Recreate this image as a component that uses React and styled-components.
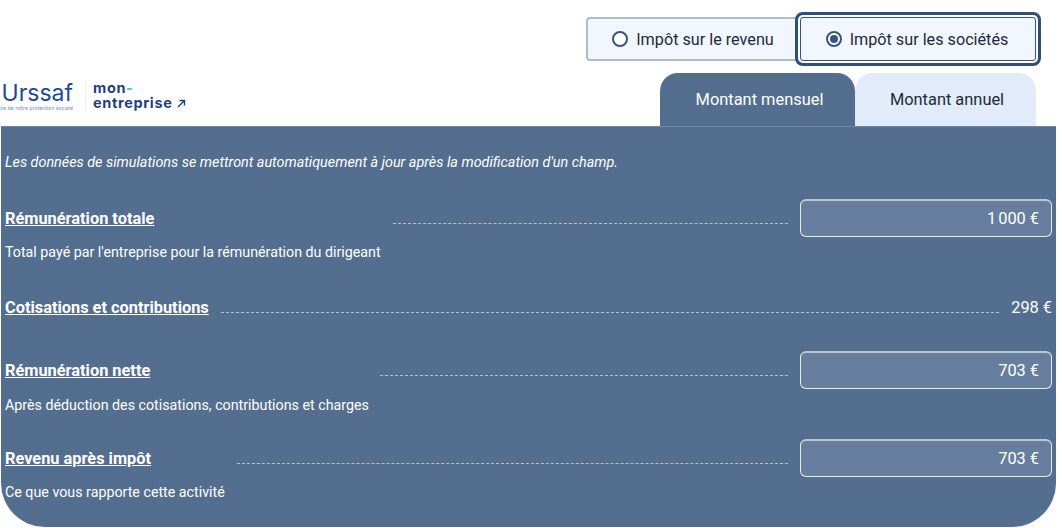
import React from "react";
import styled, { createGlobalStyle } from "styled-components";

const Global = createGlobalStyle`
  html, body { margin: 0; padding: 0; background: #fff; }
  body { font-family: Roboto, "Liberation Sans", sans-serif; overflow: hidden; }
`;
const Page = styled.div`
  width: 1056px;
  height: 528px;
  display: flex;
  flex-direction: column;
`;
const RadioBar = styled.div`
  display: flex;
  justify-content: flex-end;
  padding: 17px 20px 0 0;
  height: 44px;
`;
const RadioOption = styled.div`
  display: flex;
  align-items: center;
  justify-content: center;
  gap: 8px;
  height: 44px;
  box-sizing: border-box;
  width: ${(p) => p.$width}px;
  padding-right: ${(p) => (p.$active ? 2 : 0)}px;
  background: #f2f6fe;
  border-radius: 4px;
  font-size: 16.2px;
  color: #1e2a38;
  position: relative;
  border: 2px solid ${(p) => (p.$active ? "#34557d" : "#b0bbc7")};
  ${(p) => p.$active && "box-shadow: 0 0 0 2px #fff, 0 0 0 5px #2f4f78; border-radius: 3px; border-width:1px; z-index:1;"}
`;
const RadioCircle = styled.span`
  width: 16px;
  height: 16px;
  box-sizing: border-box;
  border: 2px solid #34557d;
  border-radius: 50%;
  background: #fff;
  display: flex;
  align-items: center;
  justify-content: center;
  &::after {
    content: "";
    display: ${(p) => (p.$checked ? "block" : "none")};
    width: 8px;
    height: 8px;
    border-radius: 50%;
    background: #34557d;
  }
`;
const HeaderRow = styled.div`
  display: flex;
  align-items: flex-end;
  justify-content: space-between;
  height: 65px;
  padding-right: 20px;
`;
const Logo = styled.div`
  display: flex;
  align-items: center;
  height: 32px;
  margin-bottom: 15px;
  width: 200px;
  overflow: hidden;
`;
const UrssafBlock = styled.div`
  width: 74px;
  padding: 1px 12px 0 0;
  box-sizing: content-box;
  border-right: 1px solid #eef1f5;
  height: 31px;
  display: flex;
  flex-direction: column;
  align-items: flex-end;
  justify-content: center;
  flex: none;
  overflow: hidden;
  margin-left: -1px;
`;
const UrssafName = styled.div`
  font-family: Inter, sans-serif;
  font-size: 23px;
  line-height: 24px;
  color: #1c4a92;
`;
const UrssafTag = styled.div`
  font-family: Inter, sans-serif;
  font-size: 5.2px;
  line-height: 6px;
  color: #6e8cc0;
  white-space: nowrap;
`;
const MonEntreprise = styled.div`
  margin-left: 7px;
  font-family: Inter, sans-serif;
  font-weight: 700;
  font-size: 14.5px;
  line-height: 15px;
  color: #1c3f80;
  letter-spacing: 0.65px;
  white-space: nowrap;
`;
const Cyan = styled.span`
  color: #44c2dc;
`;
const Tabs = styled.div`
  display: flex;
`;
const Tab = styled.div`
  height: 53px;
  width: ${(p) => p.$width}px;
  box-sizing: border-box;
  display: flex;
  align-items: center;
  justify-content: center;
  padding-left: ${(p) => p.$pad}px;
  font-size: 16.4px;
  border-radius: 18px 18px 0 0;
  background: ${(p) => (p.$active ? "#536e8f" : "#e1ebf9")};
  color: ${(p) => (p.$active ? "#fff" : "#1e2a38")};
`;
const Panel = styled.div`
  height: 401px;
  margin-left: 1px;
  box-sizing: border-box;
  background: #536e8f;
  border-top: 1px solid #6f86a3;
  border-radius: 0 0 44px 44px;
  color: #fff;
  padding: 27px 4px 0 4px;
  display: flex;
  flex-direction: column;
`;
const Intro = styled.div`
  font-style: italic;
  font-size: 14.37px;
  line-height: 17px;
  height: 45px;
`;
const Row = styled.div`
  display: flex;
  align-items: center;
  height: 38px;
  margin-top: ${(p) => p.$top}px;
`;
const Title = styled.div`
  font-weight: 700;
  font-size: 16.35px;
  line-height: 19px;
  text-decoration: underline;
  white-space: nowrap;
  flex: none;
`;
const Dashes = styled.div`
  flex: 1;
  align-self: flex-end;
  height: 0;
  border-top: 1px dashed #b3c0d0;
  margin: 0 ${(p) => p.$right}px 13px ${(p) => p.$left}px;
`;
const Field = styled.div`
  width: 252px;
  height: 38px;
  box-sizing: border-box;
  flex: none;
  background: #667f9e;
  border: 1px solid #e9edf2;
  border-top: 2px solid #bcc7d4;
  border-radius: 6px;
  padding-right: 12px;
  display: flex;
  align-items: center;
  justify-content: flex-end;
  font-size: 16.35px;
`;
const Amount = styled.div`
  font-size: 16.35px;
  flex: none;
`;
const Help = styled.div`
  font-size: 14.25px;
  line-height: 17px;
  margin-top: ${(p) => p.$top}px;
`;

const Arrow = () => (
  <svg width="9" height="9" viewBox="0 0 9 9" style={{ marginLeft: 4 }}>
    <path d="M1 8 L7.5 1.5 M2.5 1.5 H7.5 V6.5" stroke="#1c3f80" strokeWidth="1.4" fill="none" />
  </svg>
);

export default function App() {
  return (
    <Page>
      <Global />
      <RadioBar>
        <RadioOption $width={214}>
          <RadioCircle />
          Impôt sur le revenu
        </RadioOption>
        <RadioOption $width={236} $active>
          <RadioCircle $checked />
          Impôt sur les sociétés
        </RadioOption>
      </RadioBar>
      <HeaderRow>
        <Logo>
          <UrssafBlock>
            <UrssafName>Urssaf</UrssafName>
            <UrssafTag>ce de notre protection sociale</UrssafTag>
          </UrssafBlock>
          <MonEntreprise>
            mon<Cyan>-</Cyan>
            <br />
            entreprise
            <Arrow />
          </MonEntreprise>
        </Logo>
        <Tabs>
          <Tab $width={195} $active $pad={4}>
            Montant mensuel
          </Tab>
          <Tab $width={181} $pad={3}>
            Montant annuel
          </Tab>
        </Tabs>
      </HeaderRow>
      <Panel>
        <Intro>Les données de simulations se mettront automatiquement à jour après la modification d'un champ.</Intro>
        <Row $top={0}>
          <Title>Rémunération totale</Title>
          <Dashes $left={239} $right={12} />
          <Field>1{"\u202f"}000 €</Field>
        </Row>
        <Help $top={7}>Total payé par l'entreprise pour la rémunération du dirigeant</Help>
        <Row $top={27}>
          <Title>Cotisations et contributions</Title>
          <Dashes $left={12} $right={12} />
          <Amount>298 €</Amount>
        </Row>
        <Row $top={25}>
          <Title>Rémunération nette</Title>
          <Dashes $left={230} $right={12} />
          <Field>703 €</Field>
        </Row>
        <Help $top={8}>Après déduction des cotisations, contributions et charges</Help>
        <Row $top={25}>
          <Title>Revenu après impôt</Title>
          <Dashes $left={86} $right={12} />
          <Field>703 €</Field>
        </Row>
        <Help $top={7}>Ce que vous rapporte cette activité</Help>
      </Panel>
    </Page>
  );
}
